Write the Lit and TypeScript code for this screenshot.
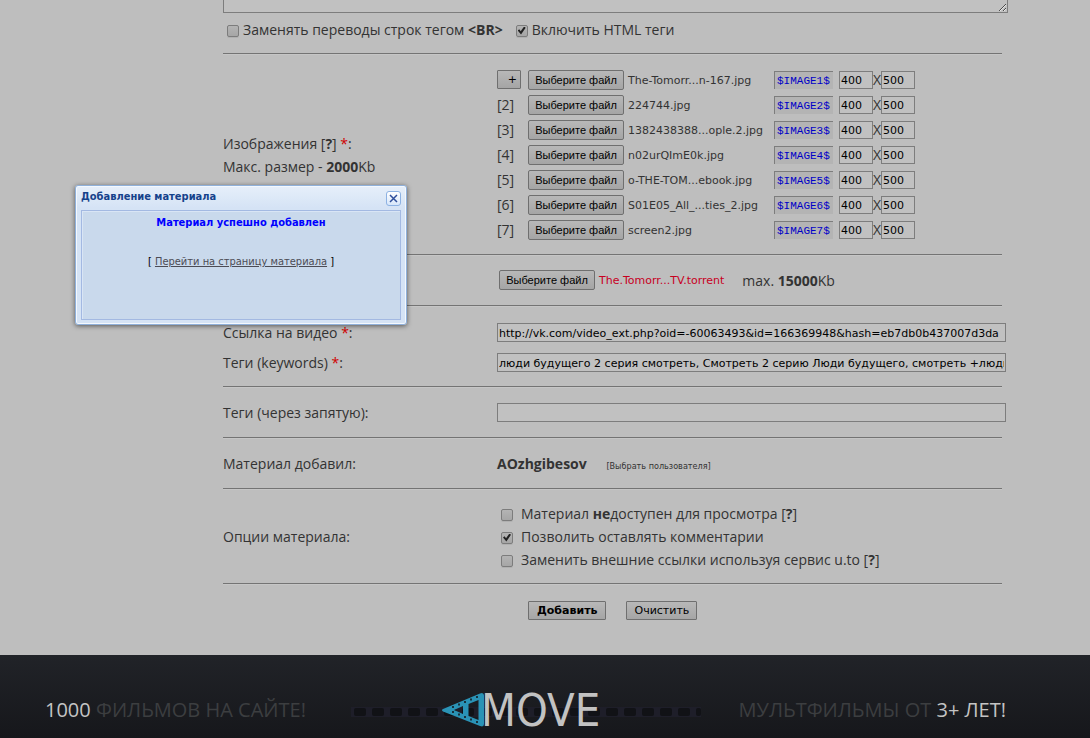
import { LitElement, html, css, svg, nothing } from "lit";
import { customElement, property, state } from "lit/decorators.js";

interface ImageSlot {
  index: number;
  file: string;
}

const IMAGES: ImageSlot[] = [
  { index: 1, file: "The-Tomorr...n-167.jpg" },
  { index: 2, file: "224744.jpg" },
  { index: 3, file: "1382438388...ople.2.jpg" },
  { index: 4, file: "n02urQImE0k.jpg" },
  { index: 5, file: "o-THE-TOM...ebook.jpg" },
  { index: 6, file: "S01E05_All_...ties_2.jpg" },
  { index: 7, file: "screen2.jpg" },
];

@customElement("file-picker")
export class FilePicker extends LitElement {
  @property() file = "";
  @property({ type: Boolean }) alert = false;

  static styles = css`
    :host {
      display: flex;
      align-items: center;
      gap: 4px;
      font: 11px/20px "DejaVu Sans", sans-serif;
      color: #333;
      white-space: nowrap;
    }
    button {
      box-sizing: border-box;
      width: 96px;
      height: 20px;
      padding: 0;
      border: 1px solid #6f6f6f;
      border-radius: 2px;
      background: linear-gradient(#b8b8b8, #a5a5a5);
      font: 11px/18px "Liberation Sans", Arial, sans-serif;
      color: #000;
    }
    span {
      padding-top: 2px;
    }
    .alert {
      color: #c8001e;
    }
  `;

  private pick() {
    this.renderRoot.querySelector<HTMLInputElement>("input")?.click();
  }

  private changed(e: Event) {
    const chosen = (e.target as HTMLInputElement).files?.[0];
    if (chosen) this.file = chosen.name;
  }

  render() {
    return html`
      <button type="button" @click=${this.pick}>Выберите файл</button>
      <input type="file" hidden @change=${this.changed} />
      <span class=${this.alert ? "alert" : "name"}>${this.file}</span>
    `;
  }
}

@customElement("site-footer")
export class SiteFooter extends LitElement {
  static styles = css`
    :host {
      display: grid;
      grid-template-columns: 1fr auto 1fr;
      align-items: center;
      box-sizing: border-box;
      min-height: 83px;
      padding: 26px 84px 0 45px;
      background: linear-gradient(#212328, #16171b);
      font: 20px/28px "Open Sans", sans-serif;
      color: #c4c4c4;
      white-space: nowrap;
    }
    .right {
      text-align: right;
    }
    .dim {
      color: #3c3e40;
    }
    .logo {
      display: block;
      width: 350px;
      height: 56px;
    }
    .word {
      font: 45px "DejaVu Sans Condensed", "DejaVu Sans", sans-serif;
      font-stretch: condensed;
      fill: #c2c2c2;
    }
  `;

  render() {
    const holes = Array.from({ length: 20 }, (_, i) => i);
    const perforations = [
      [12, 17], [18, 14.5], [24, 12], [30, 9.5], [36, 7],
      [12, 22], [18, 24.5], [24, 27], [30, 29.5], [36, 32],
    ];
    return html`
      <div><span>1000</span> <span class="dim">ФИЛЬМОВ НА САЙТЕ!</span></div>
      <svg class="logo" viewBox="0 -8 350 56" role="img" aria-label="MOVE">
        <rect y="17" width="350" height="10" fill="#1e1e29" />
        ${holes.map(
          (i) => svg`<rect x=${3 + i * 18} y="18" width=${i === 19 ? 5 : 12} height="8" rx="2" fill="#111216" />`,
        )}
        <path
          fill="#2a93b6"
          fill-rule="evenodd"
          d="M92 19 L129 3.4 Q133 2 133 5.500 V34 Q133 37.500 129 36 L92 21.500 Q90 20 92 19 Z M103 20 L112 24 V16 Z M117.500 14 V26 L127.500 30 V10 Z"
        />
        ${perforations.map(
          ([x, y]) => svg`<rect x=${90 + x - 1} y=${y - 1} width="2" height="2" fill="#17313d" />`,
        )}
        <text class="word" x="130" y="36">MOVE</text>
      </svg>
      <div class="right"><span class="dim">МУЛЬТФИЛЬМЫ ОТ</span> <span>3+ ЛЕТ!</span></div>
    `;
  }
}

@customElement("result-window")
export class ResultWindow extends LitElement {
  static styles = css`
    :host {
      box-sizing: border-box;
      display: flex;
      flex-direction: column;
      padding: 0 5px 4px;
      border: 1px solid #8fb0da;
      border-radius: 3px;
      background: linear-gradient(#e6effa, #d5e3f5 22px);
      box-shadow: inset 0 0 0 1px #f3f8fe, 0 1px 5px rgba(0, 0, 0, 0.55);
      font: 11px/14px "DejaVu Sans Condensed", "DejaVu Sans", sans-serif;
      font-stretch: condensed;
      color: #000;
    }
    header {
      display: flex;
      justify-content: space-between;
      align-items: center;
      height: 24px;
    }
    h2 {
      margin: 0 0 2px;
      font-size: 11px;
      line-height: 14px;
      color: #15428b;
    }
    .close {
      display: grid;
      place-items: center;
      width: 15px;
      height: 15px;
      padding: 0;
      border: 1px solid #8db2e3;
      border-radius: 3px;
      background: linear-gradient(#fff, #d6e6fa);
    }
    .body {
      flex: 1;
      border: 1px solid #a3b9e2;
      box-shadow: inset 1px 1px 0 #d9e5f5;
      background: #c9d9ec;
      text-align: center;
    }
    p {
      margin: 5px 0 25px;
    }
    .done {
      font-weight: bold;
      color: #00f;
    }
    a {
      color: #4c4c55;
    }
  `;

  private close() {
    this.dispatchEvent(new CustomEvent("close"));
  }

  render() {
    return html`
      <header>
        <h2>Добавление материала</h2>
        <button class="close" aria-label="Закрыть" @click=${this.close}>
          <svg width="9" height="9" viewBox="0 0 9 9">
            <path d="M1 1 L8 8 M8 1 L1 8" stroke="#2f4f9c" stroke-width="1.500" />
          </svg>
        </button>
      </header>
      <div class="body">
        <p class="done">Материал успешно добавлен</p>
        <p>[ <a href="#material">Перейти на страницу материала</a> ]</p>
      </div>
    `;
  }
}

@customElement("app-root")
export class AppRoot extends LitElement {
  @state() private windowOpen = true;

  static styles = css`
    :host {
      display: flex;
      flex-direction: column;
      min-height: 100vh;
      position: relative;
      background: #bebebe;
      font: 14px/23px "Open Sans", sans-serif;
      color: #333;
    }
    form {
      flex: 1;
      padding: 0 88px 20px 223px;
    }
    textarea {
      display: block;
      box-sizing: border-box;
      width: calc(100% + 6px);
      height: 13px;
      padding: 0;
      border: 1px solid #7d7d7d;
      border-top: 0;
      background: #c1c1c1;
    }
    .toggles {
      display: flex;
      gap: 13px;
      padding: 5px 0 12px 4px;
      white-space: nowrap;
    }
    .toggles label {
      display: flex;
      align-items: center;
      gap: 3px;
    }
    .section {
      display: grid;
      grid-template-columns: 274px minmax(0, 1fr);
      align-items: center;
      box-sizing: border-box;
      min-height: 51px;
      padding: 0;
      border-top: 1px solid #747474;
      box-shadow: inset 0 1px 0 #c6c6c6;
    }
    .roomy {
      padding: 13px 0 12px;
    }
    .pairs {
      grid-auto-rows: 30px;
      padding: 11px 0 9px;
    }
    .slot {
      display: flex;
      align-items: center;
      height: 25px;
    }
    .index {
      width: 31px;
      flex: none;
    }
    .slot file-picker {
      width: 246px;
      flex: none;
    }
    .torrent {
      display: flex;
      align-items: center;
      gap: 18px;
      padding-left: 2px;
      white-space: nowrap;
    }
    .field,
    .size {
      box-sizing: border-box;
      border: 1px solid #7d7d7d;
      border-radius: 0;
      background: #c1c1c1;
      font: 11px/15px "DejaVu Sans", sans-serif;
      color: #000;
    }
    .field {
      width: calc(100% + 4px);
      height: 19px;
      padding: 2px 1px 0;
    }
    .size {
      width: 34px;
      height: 18px;
      padding: 2px 1px 0;
    }
    .code {
      box-sizing: border-box;
      width: 59px;
      height: 18px;
      margin-right: 6px;
      padding: 2px 2px 0;
      border: 0 solid #7d7d7d;
      border-width: 1px 0 0 1px;
      background: #b4b4b4;
      font: 11px/15px "Liberation Mono", monospace;
      color: #0000c8;
    }
    input[type="checkbox"] {
      appearance: none;
      display: grid;
      place-items: center;
      box-sizing: border-box;
      flex: none;
      width: 12px;
      height: 12px;
      margin: 2px 1px 0 0;
      border: 1px solid #7c7c7c;
      border-radius: 2px;
      background: linear-gradient(#b4b4b4, #a6a6a6);
      box-shadow: 0 1px 0 #b0b0b0;
    }
    input[type="checkbox"]:checked::before {
      content: "";
      width: 8px;
      height: 8px;
      background: #222;
      clip-path: polygon(0 50%, 20% 35%, 38% 60%, 80% 0, 100% 15%, 42% 100%);
    }
    .options label {
      display: flex;
      align-items: center;
      gap: 7px;
      padding-left: 4px;
    }
    .push {
      box-sizing: border-box;
      height: 19px;
      padding: 0 7px;
      border: 1px solid #6f6f6f;
      border-radius: 1px;
      background: linear-gradient(#b8b8b8, #a5a5a5);
      font: 11px/15px "DejaVu Sans", sans-serif;
      color: #000;
    }
    .plus {
      display: block;
      width: 24px;
      padding: 0 3px;
      text-align: right;
    }
    .strong {
      font-weight: bold;
    }
    .actions {
      display: flex;
      gap: 20px;
      padding: 2px 0 0 31px;
    }
    .actions .strong {
      padding: 0 8px;
    }
    .req {
      color: #d00000;
    }
    .pick {
      margin-left: 16px;
      font: 9px/12px "DejaVu Sans Condensed", "DejaVu Sans", sans-serif;
      font-stretch: condensed;
      color: #333;
      text-decoration: none;
    }
    result-window {
      position: absolute;
      left: 75px;
      top: 185px;
      width: 332px;
      height: 140px;
    }
  `;

  private slotRow(s: ImageSlot) {
    return html`
      <div class="slot">
        <div class="index">
          ${s.index === 1
            ? html`<button type="button" class="push plus">+</button>`
            : html`[${s.index}]`}
        </div>
        <file-picker file=${s.file}></file-picker>
        <input class="code" readonly aria-label="Код изображения" value="$IMAGE${s.index}$" />
        <input class="size" aria-label="Ширина" value="400" /><span>X</span
        ><input class="size" aria-label="Высота" value="500" />
      </div>
    `;
  }

  render() {
    return html`
      <form @submit=${(e: Event) => e.preventDefault()}>
        <textarea aria-label="Текст материала"></textarea>
        <div class="toggles">
          <label><input type="checkbox" /><span>Заменять переводы строк тегом <b>&lt;BR&gt;</b></span></label>
          <label><input type="checkbox" checked /><span>Включить HTML теги</span></label>
        </div>

        <div class="section roomy">
          <div>Изображения [<b>?</b>] <span class="req">*</span>:<br />Макс. размер - <b>2000</b>Kb</div>
          <div>${IMAGES.map((s) => this.slotRow(s))}</div>
        </div>

        <div class="section">
          <span></span>
          <div class="torrent">
            <file-picker alert file="The.Tomorr...TV.torrent"></file-picker>
            <span>max. <b>15000</b>Kb</span>
          </div>
        </div>

        <div class="section pairs">
          <label for="video">Ссылка на видео <span class="req">*</span>:</label>
          <input id="video" class="field"
            value="http://vk.com/video_ext.php?oid=-60063493&amp;id=166369948&amp;hash=eb7db0b437007d3da" />
          <label for="keywords">Теги (keywords) <span class="req">*</span>:</label>
          <input id="keywords" class="field"
            value="люди будущего 2 серия смотреть, Смотреть 2 серию Люди будущего, смотреть +люди будущего" />
        </div>

        <div class="section">
          <label for="tags">Теги (через запятую):</label>
          <input id="tags" class="field" />
        </div>

        <div class="section">
          <div>Материал добавил:</div>
          <div><b>AOzhgibesov</b> <a class="pick" href="#users">[Выбрать пользователя]</a></div>
        </div>

        <div class="section roomy">
          <div>Опции материала:</div>
          <div class="options">
            <label><input type="checkbox" /><span>Материал <b>не</b>доступен для просмотра [<b>?</b>]</span></label>
            <label><input type="checkbox" checked /><span>Позволить оставлять комментарии</span></label>
            <label><input type="checkbox" /><span>Заменить внешние ссылки используя сервис u.to [<b>?</b>]</span></label>
          </div>
        </div>

        <div class="section">
          <span></span>
          <div class="actions">
            <button class="push strong">Добавить</button>
            <button type="reset" class="push">Очистить</button>
          </div>
        </div>
      </form>
      <site-footer></site-footer>
      ${this.windowOpen
        ? html`<result-window @close=${() => (this.windowOpen = false)}></result-window>`
        : nothing}
    `;
  }
}
